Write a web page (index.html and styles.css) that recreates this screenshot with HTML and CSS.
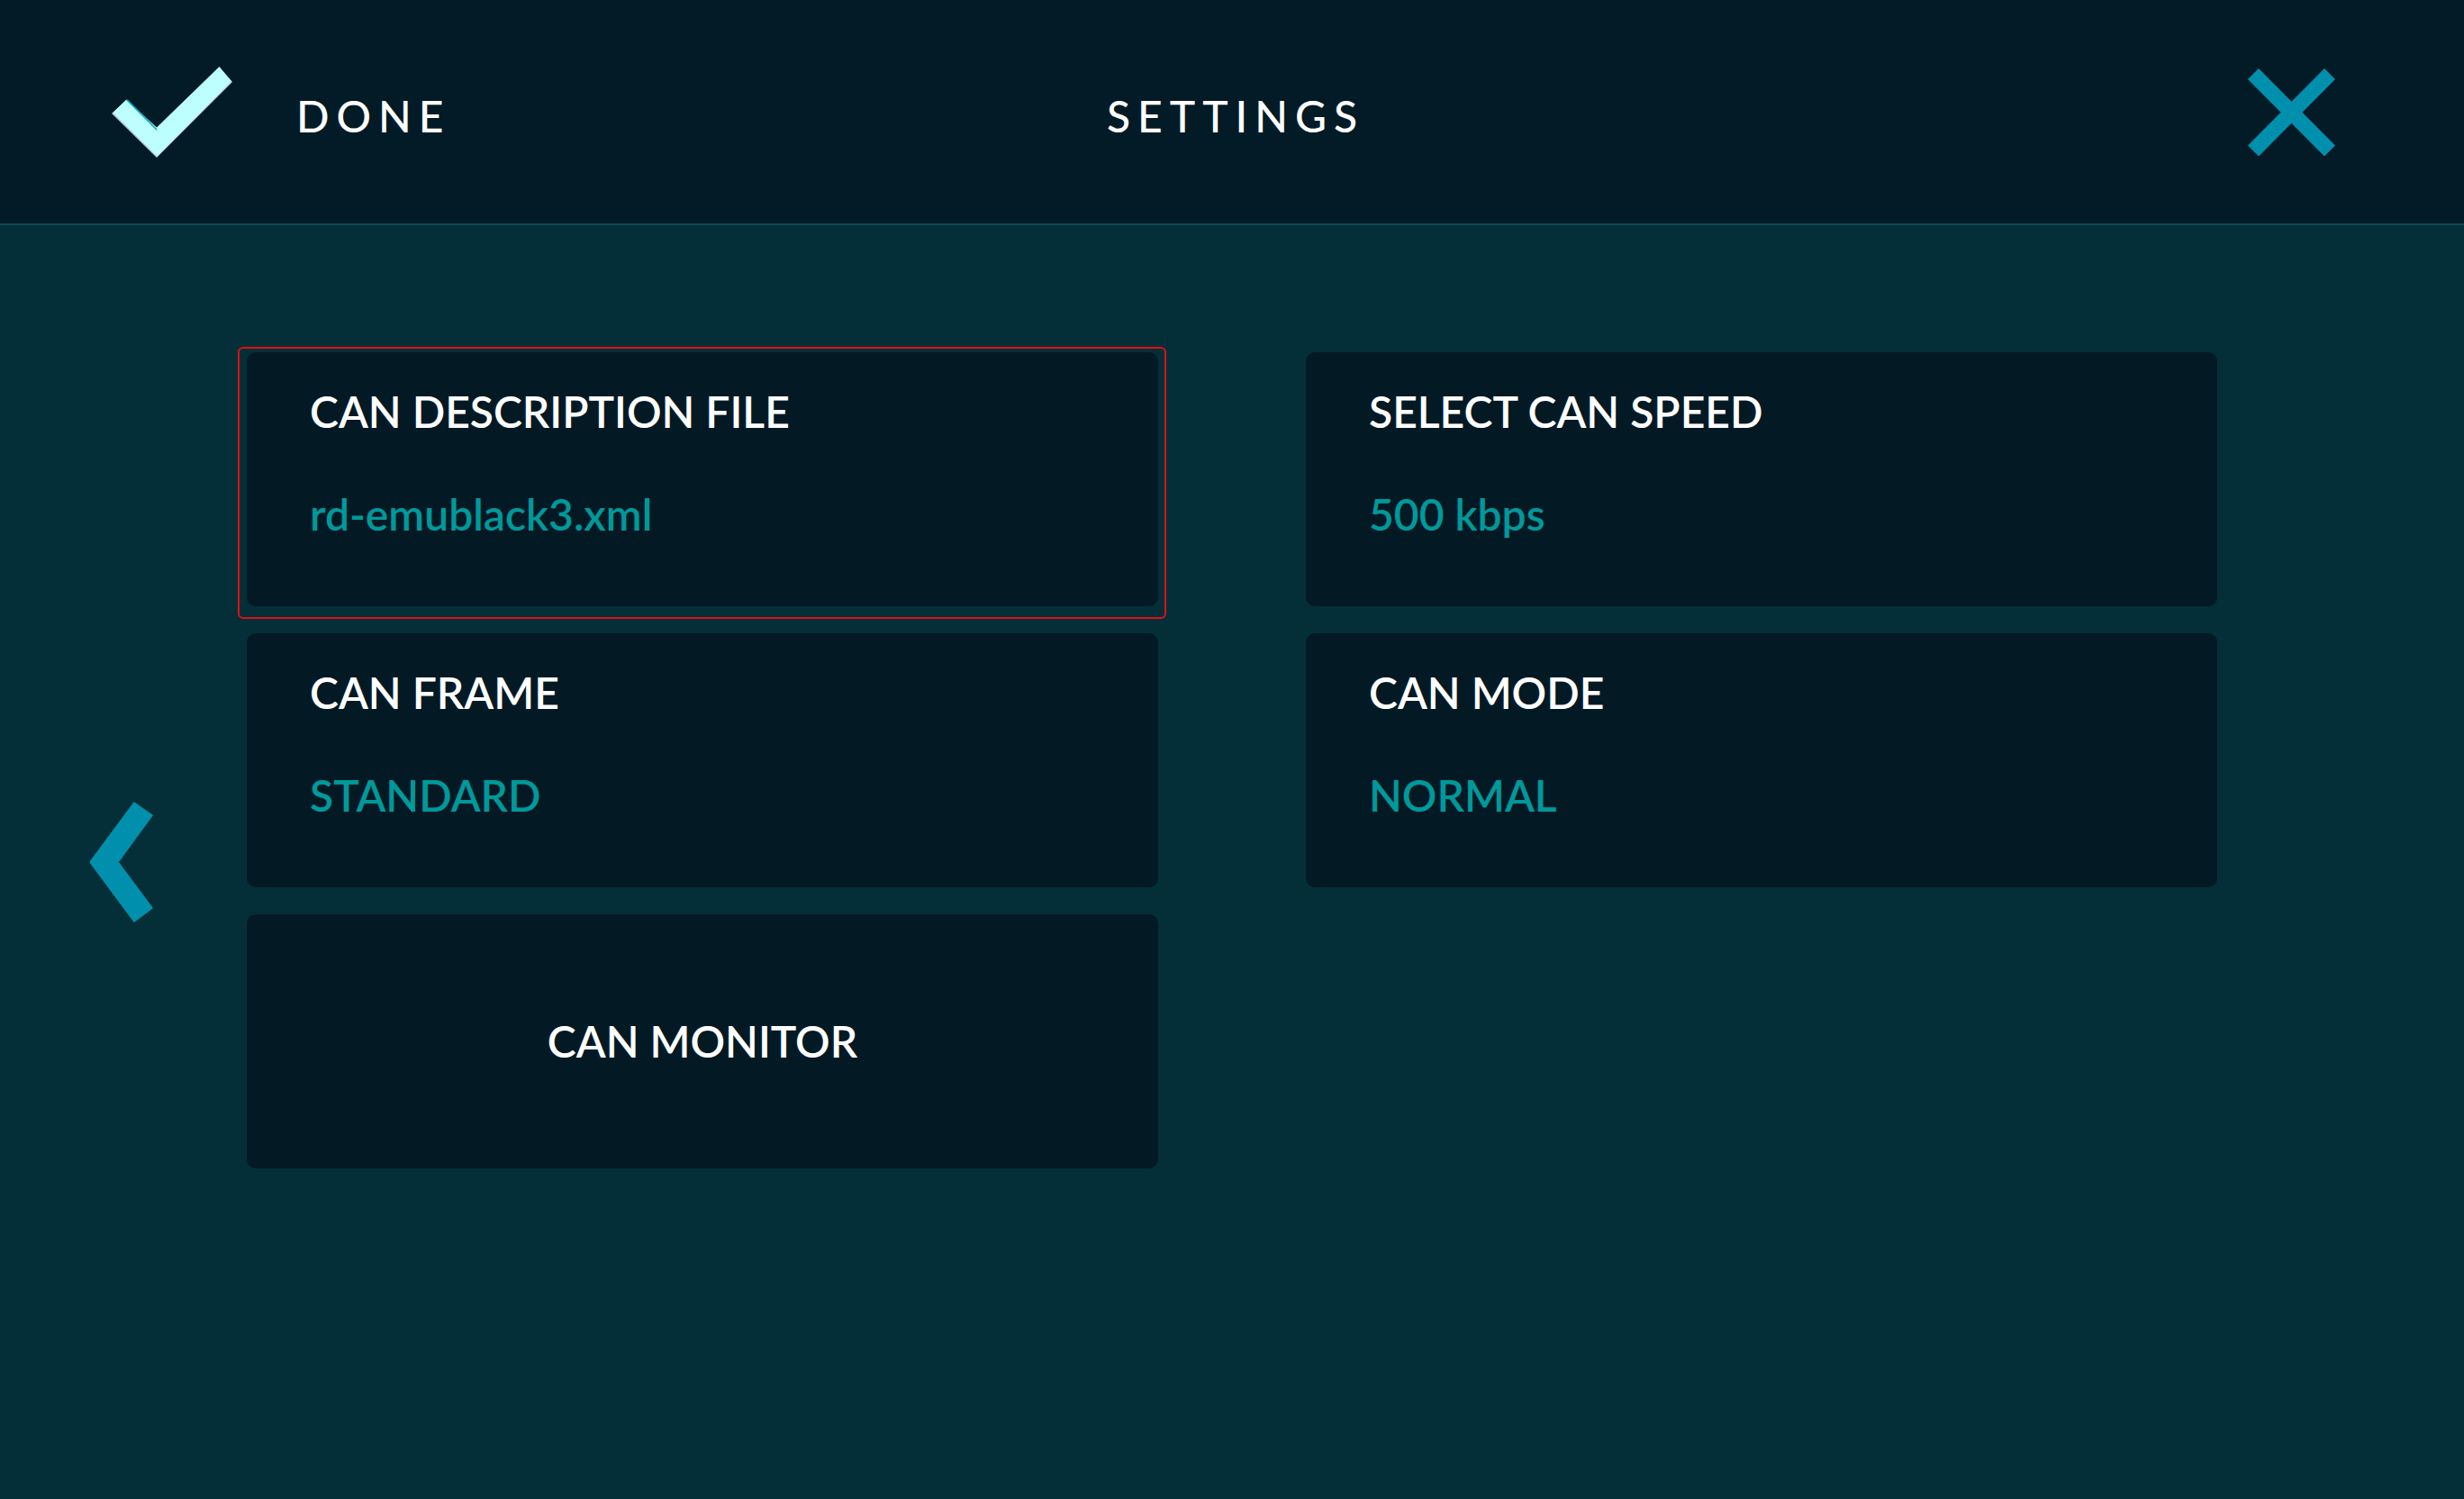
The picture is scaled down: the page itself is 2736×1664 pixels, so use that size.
FILE: index.html
```html
<!DOCTYPE html>
<html>
<head>
<meta charset="utf-8">
<link rel="stylesheet" href="styles.css">
</head>
<body>
<header class="topbar">
  <div class="left">
    <svg class="check" width="140" height="105" viewBox="0 0 140 105">
      <polygon points="2,53 18,38 52,70 121,2 136,18 52,102" fill="#b9c9d4"/>
      <polygon points="3.5,52 18.5,37.5 52,68.5 121.5,1 135,17 52.5,100.5" fill="#bdffff"/>
      <polygon points="18,38 20,37.5 52,70 52,72" fill="#00a5b8"/>
    </svg>
    <span class="hdr-text done">DONE</span>
  </div>
  <div class="center"><span class="hdr-text title">SETTINGS</span></div>
  <div class="right">
    <svg class="close" width="97" height="97" viewBox="0 0 97 97">
      <line x1="6" y1="6" x2="91" y2="91.5" stroke="#0090ad" stroke-width="17"/>
      <line x1="91" y1="6" x2="6" y2="91.5" stroke="#0090ad" stroke-width="17"/>
    </svg>
  </div>
</header>
<main class="content">
  <div class="back-col">
    <svg class="back" width="70" height="134" viewBox="0 0 70 134">
      <polygon points="49,1 69,15 31,67 69,118 49,133 0,67" fill="#0090ad" stroke="#0090ad" stroke-width="1.5" stroke-linejoin="round"/>
    </svg>
  </div>
  <div class="grid">
    <div class="card selected">
      <div class="card-title">CAN DESCRIPTION FILE</div>
      <div class="card-value">rd-emublack3.xml</div>
    </div>
    <div class="card">
      <div class="card-title">SELECT CAN SPEED</div>
      <div class="card-value">500 kbps</div>
    </div>
    <div class="card">
      <div class="card-title">CAN FRAME</div>
      <div class="card-value">STANDARD</div>
    </div>
    <div class="card">
      <div class="card-title">CAN MODE</div>
      <div class="card-value">NORMAL</div>
    </div>
    <div class="card button">
      <div class="card-title">CAN MONITOR</div>
    </div>
  </div>
</main>
</body>
</html>
```

FILE: styles.css
```css
* { box-sizing: border-box; }
html, body {
  margin: 0;
  padding: 0;
}
body {
  width: 2736px;
  height: 1664px;
  background: #052f38;
  font-family: Lato, "Open Sans", "Liberation Sans", sans-serif;
  overflow: hidden;
}
.topbar {
  height: 250px;
  background: #021b26;
  border-bottom: 2px solid #0c4856;
  display: grid;
  grid-template-columns: 1fr auto 1fr;
  align-items: center;
}
.left {
  display: flex;
  align-items: center;
  padding-left: 122px;
}
.check {
  display: block;
  margin-top: 3px;
}
.hdr-text {
  color: #ffffff;
  font-size: 48px;
  font-weight: 500;
  letter-spacing: 8px;
  line-height: 1.2;
  padding-top: 9px;
}
.done {
  margin-left: 67px;
}
.title {
  display: block;
  padding-left: 8px;
}
.right {
  display: flex;
  justify-content: flex-end;
  padding-right: 143px;
}
.close {
  display: block;
  margin-top: 1px;
}
.content {
  display: flex;
  height: 1414px;
}
.back-col {
  width: 274px;
  flex: none;
  display: flex;
  align-items: center;
  padding-left: 100px;
}
.back {
  display: block;
}
.grid {
  margin-top: 141px;
  display: grid;
  grid-template-columns: 1012px 1012px;
  grid-auto-rows: 282px;
  column-gap: 164px;
  row-gap: 30px;
  align-self: flex-start;
}
.card {
  position: relative;
  background: #031a25;
  border-radius: 10px;
  padding: 37px 70px;
}
.card.selected::before {
  content: "";
  position: absolute;
  top: -6px;
  left: -10px;
  right: -9px;
  bottom: -14px;
  border: 2px solid #e01010;
  border-radius: 6px;
  pointer-events: none;
}
.card-title {
  color: #ffffff;
  font-size: 48px;
  font-weight: 600;
  line-height: 1.2;
}
.card-value {
  color: #00999b;
  font-size: 48px;
  font-weight: 600;
  line-height: 1.2;
  margin-top: 56px;
}
.card.button {
  display: flex;
  align-items: center;
  justify-content: center;
  padding: 0;
}
```
